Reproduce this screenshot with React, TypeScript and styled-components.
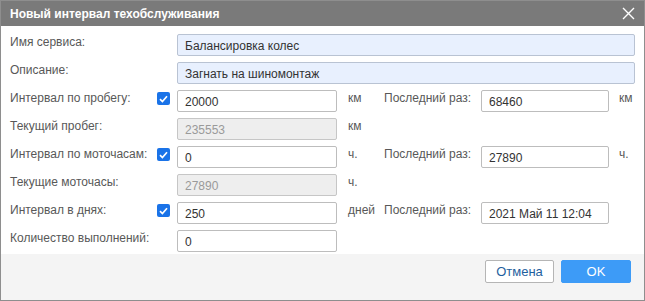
import styled, { createGlobalStyle } from 'styled-components';

const GlobalStyle = createGlobalStyle`
  html, body {
    margin: 0;
    padding: 0;
    background: #ffffff;
  }
  body {
    font-family: 'Liberation Sans', Arial, sans-serif;
  }
`;

const Dialog = styled.div`
  width: 645px;
  height: 301px;
  box-sizing: border-box;
  border: 1px solid #8e8e8e;
  background: #ffffff;
  display: flex;
  flex-direction: column;
`;

const TitleBar = styled.div`
  height: 25px;
  flex: none;
  background: #7a7a7a;
  display: flex;
  align-items: center;
  justify-content: space-between;
  padding: 0 9px 0 9px;
`;

const Title = styled.span`
  color: #ffffff;
  font-weight: bold;
  font-size: 12px;
`;

const CloseButton = styled.svg`
  width: 13px;
  height: 13px;
  display: block;
`;

const Body = styled.div`
  flex: 1;
  display: grid;
  grid-template-columns: 147px 20px 160px 47px 97px 128px 1fr;
  grid-auto-rows: 22px;
  row-gap: 6px;
  padding: 8px 9px 0 9px;
`;

const Label = styled.div`
  font-size: 12px;
  line-height: 16px;
  color: #585858;
  white-space: nowrap;
`;

const Unit = styled(Label)<{ $pad?: number }>`
  padding-left: ${({ $pad }) => $pad ?? 11}px;
`;

const CheckCell = styled.div`
  padding-top: 2px;
`;

const Check = styled.span`
  width: 13px;
  height: 13px;
  border-radius: 2px;
  background: #1a73e8;
  display: flex;
  align-items: center;
  justify-content: center;
`;

const Field = styled.div<{ $variant?: 'blue' | 'disabled' | 'plain'; $wide?: boolean }>`
  grid-column: ${({ $wide }) => ($wide ? '3 / -1' : 'auto')};
  box-sizing: border-box;
  height: 22px;
  border: 1px solid
    ${({ $variant }) =>
      $variant === 'blue' ? '#b9c3d3' : $variant === 'disabled' ? '#c6c6c6' : '#bdbdbd'};
  border-radius: 2px;
  background: ${({ $variant }) =>
    $variant === 'blue' ? '#e8f0fe' : $variant === 'disabled' ? '#eeeeee' : '#ffffff'};
  color: ${({ $variant }) => ($variant === 'disabled' ? '#9a9a9a' : '#333333')};
  font-size: 12px;
  line-height: 20px;
  padding: 1px 7px 0 7px;
  white-space: nowrap;
  overflow: hidden;
`;

const Footer = styled.div`
  height: 40px;
  flex: none;
  background: #f4f4f4;
  display: flex;
  justify-content: flex-end;
  align-items: flex-start;
  gap: 7px;
  padding: 6px 13px 0 0;
`;

const Button = styled.button<{ $primary?: boolean }>`
  height: 23px;
  box-sizing: border-box;
  border-radius: 2px;
  font-family: 'Liberation Sans', Arial, sans-serif;
  font-size: 13px;
  padding: 0;
  width: ${({ $primary }) => ($primary ? 70 : 69)}px;
  border: 1px solid ${({ $primary }) => ($primary ? '#3d9bf7' : '#b5b5b5')};
  background: ${({ $primary }) => ($primary ? '#3d9bf7' : '#ffffff')};
  color: ${({ $primary }) => ($primary ? '#ffffff' : '#1f5f9e')};
`;

function Checkbox() {
  return (
    <CheckCell>
      <Check>
        <svg width="9" height="8" viewBox="0 0 9 8">
          <path d="M1 4.2 L3.4 6.5 L8 1.3" fill="none" stroke="#ffffff" strokeWidth="1.7" />
        </svg>
      </Check>
    </CheckCell>
  );
}

const Empty = styled.div``;

export default function App() {
  return (
    <>
      <GlobalStyle />
      <Dialog>
        <TitleBar>
          <Title>Новый интервал техобслуживания</Title>
          <CloseButton viewBox="0 0 13 13">
            <path d="M1 1 L12 12 M12 1 L1 12" stroke="#ffffff" strokeWidth="1.4" />
          </CloseButton>
        </TitleBar>
        <Body>
          <Label>Имя сервиса:</Label>
          <Empty />
          <Field $variant="blue" $wide>Балансировка колес</Field>

          <Label>Описание:</Label>
          <Empty />
          <Field $variant="blue" $wide>Загнать на шиномонтаж</Field>

          <Label>Интервал по пробегу:</Label>
          <Checkbox />
          <Field>20000</Field>
          <Unit>км</Unit>
          <Label>Последний раз:</Label>
          <Field>68460</Field>
          <Unit $pad={10}>км</Unit>

          <Label>Текущий пробег:</Label>
          <Empty />
          <Field $variant="disabled">235553</Field>
          <Unit>км</Unit>
          <Empty />
          <Empty />
          <Empty />

          <Label>Интервал по моточасам:</Label>
          <Checkbox />
          <Field>0</Field>
          <Unit>ч.</Unit>
          <Label>Последний раз:</Label>
          <Field>27890</Field>
          <Unit $pad={10}>ч.</Unit>

          <Label>Текущие моточасы:</Label>
          <Empty />
          <Field $variant="disabled">27890</Field>
          <Unit>ч.</Unit>
          <Empty />
          <Empty />
          <Empty />

          <Label>Интервал в днях:</Label>
          <Checkbox />
          <Field>250</Field>
          <Unit>дней</Unit>
          <Label>Последний раз:</Label>
          <Field>2021 Май 11 12:04</Field>
          <Empty />

          <Label>Количество выполнений:</Label>
          <Empty />
          <Field>0</Field>
        </Body>
        <Footer>
          <Button>Отмена</Button>
          <Button $primary>OK</Button>
        </Footer>
      </Dialog>
    </>
  );
}
